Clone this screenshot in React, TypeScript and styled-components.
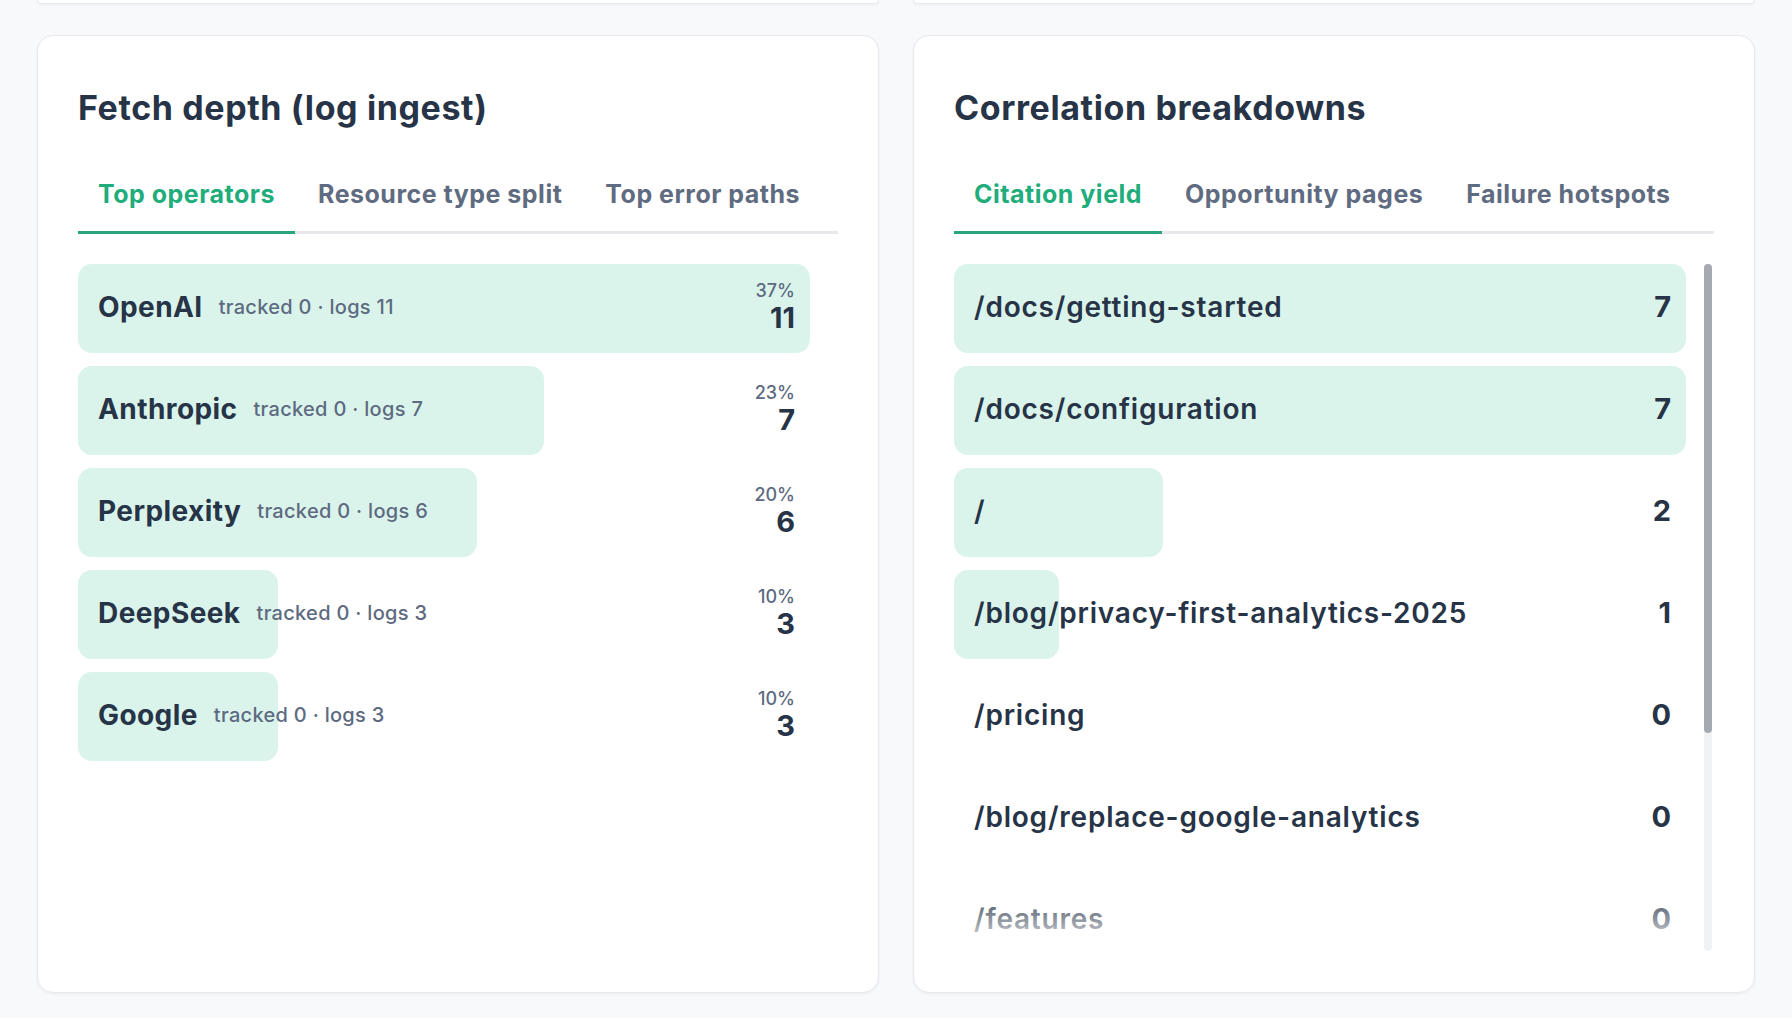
import React, { useLayoutEffect, useRef, useState } from "react";
import styled, { createGlobalStyle } from "styled-components";

const GlobalStyle = createGlobalStyle`
  * { box-sizing: border-box; }
  html, body { margin: 0; padding: 0; }
  body {
    background: #f8f9fb;
    font-family: Inter, "Noto Sans", "Liberation Sans", sans-serif;
    color: #273447;
    overflow: hidden;
  }
`;

const Page = styled.div`
  width: 1792px;
  height: 1018px;
  padding: 0 37px;
  display: flex;
  flex-direction: column;
  gap: 31px;
`;

const Grid = styled.div`
  display: grid;
  grid-template-columns: 1fr 1fr;
  column-gap: 34px;
`;

const CardTail = styled.div`
  height: 4px;
  background: #ffffff;
  border: 1px solid #e7e9ee;
  border-top: none;
  border-radius: 0 0 16px 16px;
  box-shadow: 0 1px 3px rgba(16, 24, 40, 0.05);
`;

const Card = styled.section`
  height: 958px;
  background: #ffffff;
  border: 1px solid #e7e9ee;
  border-radius: 16px;
  box-shadow: 0 1px 3px rgba(16, 24, 40, 0.05);
  padding: 44px 40px 40px;
  display: flex;
  flex-direction: column;
`;

const Title = styled.h2`
  margin: 0;
  font-size: 34px;
  line-height: 55px;
  font-weight: 700;
  color: #273447;
  letter-spacing: 0.018em;
`;

const TabList = styled.div`
  margin-top: 27px;
  display: flex;
  gap: 3px;
  border-bottom: 3px solid #e6e8ec;
`;

const Tab = styled.button<{ $active?: boolean }>`
  appearance: none;
  background: none;
  border: none;
  margin: 0 0 -3px;
  padding: 16px 20px 21px;
  font-family: inherit;
  font-size: 25px;
  line-height: 32px;
  font-weight: 700;
  letter-spacing: 0.02em;
  color: ${(p) => (p.$active ? "#21ad7b" : "#5f6b80")};
  border-bottom: 3px solid ${(p) => (p.$active ? "#2aa57e" : "transparent")};
  cursor: pointer;
`;

const ListWrap = styled.div`
  position: relative;
  margin-top: 30px;
  flex: 1;
  min-height: 0;
  display: flex;
`;

const List = styled.div`
  flex: 1;
  min-width: 0;
  overflow-y: auto;
  scrollbar-width: none;
  display: flex;
  flex-direction: column;
  gap: 13px;

  &::-webkit-scrollbar {
    display: none;
  }
`;

const Track = styled.div<{ $visible: boolean }>`
  flex-shrink: 0;
  width: 8px;
  margin: 0 2px 1px 18px;
  border-radius: 4px;
  background: ${(p) => (p.$visible ? "#f1f2f4" : "transparent")};
  display: flex;
  flex-direction: column;
`;

const Thumb = styled.div`
  width: 100%;
  border-radius: 4px;
  background: #a5a9b2;
`;

const Fade = styled.div`
  position: absolute;
  left: 0;
  right: 28px;
  bottom: 0;
  height: 66px;
  pointer-events: none;
  background: linear-gradient(rgba(255, 255, 255, 0), rgba(255, 255, 255, 0.95));
`;

const Row = styled.div`
  position: relative;
  flex-shrink: 0;
  height: 89px;
  padding: 0 15px 3px 20px;
  display: flex;
  align-items: center;
  justify-content: space-between;
  border-radius: 14px;
`;

const Bar = styled.div`
  position: absolute;
  top: 0;
  bottom: 0;
  left: 0;
  background: #daf4ec;
  border-radius: 14px;
`;

const LabelGroup = styled.div`
  position: relative;
  display: flex;
  align-items: center;
  gap: 16px;
  min-width: 0;
`;

const Name = styled.span`
  font-size: 28px;
  line-height: 34px;
  font-weight: 700;
  letter-spacing: 0.015em;
  color: #273447;
  white-space: nowrap;
`;

const Meta = styled.span`
  font-size: 20px;
  line-height: 26px;
  font-weight: 500;
  letter-spacing: 0.015em;
  color: #5d6a80;
  white-space: nowrap;
`;

const Path = styled.span`
  position: relative;
  font-size: 28px;
  line-height: 34px;
  font-weight: 600;
  letter-spacing: 0.028em;
  color: #273447;
  white-space: nowrap;
`;

const Stat = styled.div`
  position: relative;
  display: flex;
  flex-direction: column;
  align-items: flex-end;
`;

const Pct = styled.span`
  font-size: 18px;
  line-height: 22px;
  font-weight: 500;
  color: #5d6a80;
`;

const Value = styled.span`
  position: relative;
  font-size: 29px;
  line-height: 32px;
  font-weight: 700;
  color: #273447;
`;

type Operator = { name: string; tracked: number; logs: number; pct: number };

const operators: Operator[] = [
  { name: "OpenAI", tracked: 0, logs: 11, pct: 37 },
  { name: "Anthropic", tracked: 0, logs: 7, pct: 23 },
  { name: "Perplexity", tracked: 0, logs: 6, pct: 20 },
  { name: "DeepSeek", tracked: 0, logs: 3, pct: 10 },
  { name: "Google", tracked: 0, logs: 3, pct: 10 },
];

type PageItem = { path: string; count: number };

const pages: PageItem[] = [
  { path: "/docs/getting-started", count: 7 },
  { path: "/docs/configuration", count: 7 },
  { path: "/", count: 2 },
  { path: "/blog/privacy-first-analytics-2025", count: 1 },
  { path: "/pricing", count: 0 },
  { path: "/blog/replace-google-analytics", count: 0 },
  { path: "/features", count: 0 },
  { path: "/about", count: 0 },
  { path: "/changelog", count: 0 },
  { path: "/contact", count: 0 },
];

const maxLogs = Math.max(...operators.map((o) => o.logs));
const maxCount = Math.max(...pages.map((p) => p.count));

function ScrollList({ children }: { children: React.ReactNode }) {
  const ref = useRef<HTMLDivElement>(null);
  const [thumb, setThumb] = useState<{ ratio: number; offset: number } | null>(null);

  useLayoutEffect(() => {
    const el = ref.current;
    if (!el) return;
    const update = () => {
      const { scrollHeight, clientHeight, scrollTop } = el;
      if (scrollHeight > clientHeight + 1) {
        setThumb({ ratio: clientHeight / scrollHeight, offset: scrollTop / scrollHeight });
      } else {
        setThumb(null);
      }
    };
    update();
    el.addEventListener("scroll", update);
    const ro = new ResizeObserver(update);
    ro.observe(el);
    return () => {
      el.removeEventListener("scroll", update);
      ro.disconnect();
    };
  }, []);

  return (
    <ListWrap>
      <List ref={ref}>{children}</List>
      <Track $visible={!!thumb}>
        {thumb && (
          <Thumb
            style={{
              height: `${thumb.ratio * 100}%`,
              marginTop: `${thumb.offset * 100}%`,
            }}
          />
        )}
      </Track>
      <Fade />
    </ListWrap>
  );
}

export default function App() {
  return (
    <>
      <GlobalStyle />
      <Page>
        <Grid>
          <CardTail />
          <CardTail />
        </Grid>
        <Grid>
          <Card>
            <Title>Fetch depth (log ingest)</Title>
            <TabList>
              <Tab $active>Top operators</Tab>
              <Tab>Resource type split</Tab>
              <Tab>Top error paths</Tab>
            </TabList>
            <ScrollList>
              {operators.map((o) => (
                <Row key={o.name}>
                  {o.logs > 0 && <Bar style={{ width: `${(o.logs / maxLogs) * 100}%` }} />}
                  <LabelGroup>
                    <Name>{o.name}</Name>
                    <Meta>
                      tracked {o.tracked} · logs {o.logs}
                    </Meta>
                  </LabelGroup>
                  <Stat>
                    <Pct>{o.pct}%</Pct>
                    <Value>{o.logs}</Value>
                  </Stat>
                </Row>
              ))}
            </ScrollList>
          </Card>
          <Card>
            <Title>Correlation breakdowns</Title>
            <TabList>
              <Tab $active>Citation yield</Tab>
              <Tab>Opportunity pages</Tab>
              <Tab>Failure hotspots</Tab>
            </TabList>
            <ScrollList>
              {pages.map((p) => (
                <Row key={p.path}>
                  {p.count > 0 && <Bar style={{ width: `${(p.count / maxCount) * 100}%` }} />}
                  <Path>{p.path}</Path>
                  <Value>{p.count}</Value>
                </Row>
              ))}
            </ScrollList>
          </Card>
        </Grid>
      </Page>
    </>
  );
}
